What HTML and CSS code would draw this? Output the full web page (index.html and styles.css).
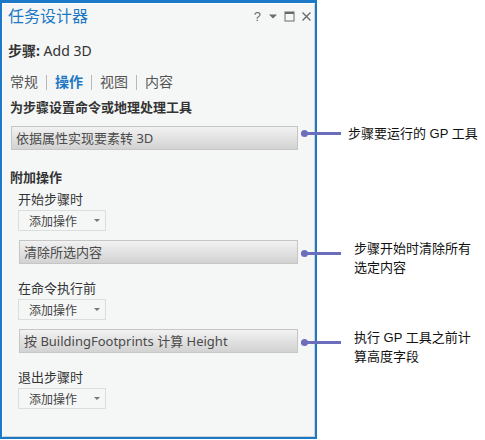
FILE: index.html
```html
<!DOCTYPE html>
<html lang="zh-CN">
<head>
    <meta charset="UTF-8">
    <title>任务设计器</title>
    <link rel="stylesheet" href="styles.css">
</head>
<body>
    <div class="sheet">
        <div class="pane">
            <div class="pane-header">
                <span class="pane-title">任务设计器</span>
                <div class="pane-tools">
                    <span class="tool-help">?</span>
                    <svg class="tool" width="10" height="10" viewBox="0 0 10 10"><path d="M1 3.5h8L5 7.5z" fill="#6a6a6a"/></svg>
                    <svg class="tool" width="11" height="11" viewBox="0 0 11 11"><rect x="1" y="1" width="9" height="9" fill="none" stroke="#6a6a6a" stroke-width="1"/><rect x="1" y="1" width="9" height="2" fill="#6a6a6a"/></svg>
                    <svg class="tool" width="11" height="11" viewBox="0 0 11 11"><path d="M1.5 1.5l8 8M9.5 1.5l-8 8" stroke="#6a6a6a" stroke-width="1.4"/></svg>
                </div>
            </div>

            <div class="step-name"><b>步骤:</b> Add 3D</div>

            <div class="tabs">
                <span>常规</span><i></i><span class="active">操作</span><i></i><span>视图</span><i></i><span>内容</span>
            </div>

            <div class="heading">为步骤设置命令或地理处理工具</div>
            <div class="field">依据属性实现要素转 3D</div>

            <div class="heading extra">附加操作</div>

            <div class="action-group">
                <div class="label">开始步骤时</div>
                <div class="dropdown">添加操作<span class="caret"></span></div>
                <div class="field">清除所选内容</div>
            </div>

            <div class="action-group">
                <div class="label">在命令执行前</div>
                <div class="dropdown">添加操作<span class="caret"></span></div>
                <div class="field">按 BuildingFootprints 计算 Height</div>
            </div>

            <div class="action-group">
                <div class="label">退出步骤时</div>
                <div class="dropdown">添加操作<span class="caret"></span></div>
            </div>
        </div>

        <!-- callouts pointing into the pane -->
        <div class="callout c1"><span class="leader"></span><p>步骤要运行的 GP 工具</p></div>
        <div class="callout c2"><span class="leader"></span><p>步骤开始时清除所有<br>选定内容</p></div>
        <div class="callout c3"><span class="leader"></span><p>执行 GP 工具之前计<br>算高度字段</p></div>
    </div>
</body>
</html>
```

FILE: styles.css
```css
body {
    margin: 0;
    background: #fff;
    font-family: 'Noto Sans', 'Noto Sans CJK SC', sans-serif;
}
.sheet {
    position: relative;
    width: 485px;
    height: 440px;
}
.pane {
    box-sizing: border-box;
    width: 317px;
    height: 439px;
    background: #f5f7f7;
    border: 2px solid #1c79c8;
    border-top-width: 3px;
    box-shadow: inset 1px 1px 0 #fff, inset -1px -1px 0 #cfd2d2;
    padding: 0 17px 0 6px;
    color: #333;
}
.pane-header {
    display: flex;
    align-items: center;
    justify-content: space-between;
    height: 26px;
}
.pane-title {
    color: #1d78c4;
    font-size: 16px;
    line-height: 26px;
}
.pane-tools {
    display: flex;
    align-items: center;
    gap: 6px;
    margin-right: -14px;
}
.tool-help {
    font-family: 'Liberation Sans', sans-serif;
    font-size: 13px;
    color: #6a6a6a;
    margin-right: 1px;
}
.step-name {
    margin-top: 12px;
    font-size: 14px;
    line-height: 20px;
    padding-left: 0;
}
.step-name b {
    font-weight: bold;
}
.tabs {
    display: flex;
    align-items: center;
    margin-top: 11px;
    padding-left: 2px;
    font-size: 14px;
    line-height: 20px;
    color: #555;
}
.tabs i {
    width: 1px;
    height: 15px;
    background: #b8b8b8;
    margin: 0 8px;
}
.tabs .active {
    color: #1d78c4;
    font-weight: bold;
}
.heading {
    margin-top: 5px;
    padding-left: 2px;
    font-size: 13px;
    font-weight: bold;
    line-height: 20px;
}
.heading.extra {
    margin-top: 17px;
}
.field {
    box-sizing: border-box;
    height: 24px;
    margin: 9px 0 0 3px;
    border: 1px solid #c6c6c6;
    background: linear-gradient(#f2f2f2, #d2d2d2);
    padding-left: 4px;
    font-size: 13px;
    line-height: 22px;
    color: #4a4a4a;
}
.action-group {
    padding-left: 10px;
    margin-top: 14px;
}
.heading.extra + .action-group {
    margin-top: 2px;
}
.action-group .label {
    font-size: 13px;
    line-height: 20px;
}
.dropdown {
    box-sizing: border-box;
    display: flex;
    align-items: center;
    width: 88px;
    height: 21px;
    margin-top: 1px;
    border: 1px solid #dcdede;
    padding-left: 10px;
    font-size: 12px;
    color: #444;
}
.caret {
    margin-left: 17px;
    border-left: 3px solid transparent;
    border-right: 3px solid transparent;
    border-top: 3px solid #777;
}
.action-group .field {
    margin-left: 1px;
}
.callout {
    position: absolute;
    left: 301px;
    display: flex;
    align-items: flex-start;
}
.leader {
    position: relative;
    width: 40px;
    height: 3px;
    margin-top: 8px;
    background: #6d6dbd;
}
.leader::before {
    content: '';
    position: absolute;
    left: 0;
    top: -2px;
    width: 7px;
    height: 7px;
    border-radius: 50%;
    background: #6d6dbd;
}
.callout p {
    margin: 0;
    font-family: 'Liberation Sans', 'Noto Sans CJK SC', sans-serif;
    font-size: 13px;
    line-height: 19px;
    color: #111;
}
.c1 { top: 124px; }
.c1 p { margin-left: 7px; }
.c2 { top: 244px; }
.c2 p { margin-left: 13px; margin-top: -5px; }
.c3 { top: 333px; }
.c3 p { margin-left: 13px; margin-top: -5px; }
```
